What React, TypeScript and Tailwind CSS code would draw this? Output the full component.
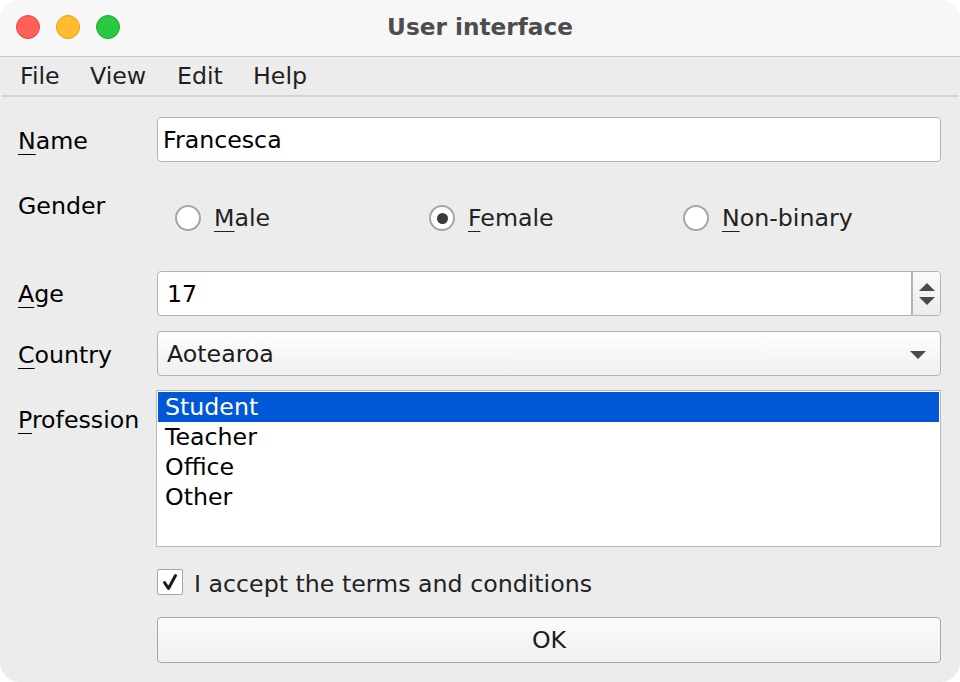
import React from 'react';

const font = { fontFamily: '"DejaVu Sans", "Liberation Sans", sans-serif' };

function U({ c, rest }: { c: string; rest: string }) {
  return (
    <span>
      <span className="underline decoration-1 underline-offset-[5px]">{c}</span>
      {rest}
    </span>
  );
}

function Radio({ label, checked }: { label: React.ReactNode; checked?: boolean }) {
  return (
    <div className="w-[254px] flex items-center gap-[13px]">
      <div className="w-[26px] h-[26px] rounded-full bg-white border-2 border-[#a6a6a6] flex items-center justify-center">
        {checked && <div className="w-[11px] h-[11px] rounded-full bg-[#3b3b3b]" />}
      </div>
      <div className="text-[23.7px] leading-[30px] text-[#222]">{label}</div>
    </div>
  );
}

export default function App() {
  return (
    <div className="w-[960px] h-[682px] bg-white" style={font}>
      <div className="w-full h-full rounded-[20px] overflow-hidden bg-[#ececec] flex flex-col">
        {/* Title bar */}
        <div className="h-[57px] shrink-0 bg-[#f7f7f7] border-b border-[#c9c9c9] relative flex items-center justify-center">
          <div className="absolute left-[16px] top-[15px] flex gap-[16px]">
            <div className="w-[24px] h-[24px] rounded-full bg-[#fe5f57] border border-[#e2463f]" />
            <div className="w-[24px] h-[24px] rounded-full bg-[#febc2e] border border-[#e1a116]" />
            <div className="w-[24px] h-[24px] rounded-full bg-[#28c840] border border-[#1aab29]" />
          </div>
          <div className="text-[23.2px] font-bold text-[#4d4d4d] -mt-[1px]">User interface</div>
        </div>

        {/* Menu bar */}
        <div className="h-[40px] shrink-0 flex flex-col">
          <div className="flex-1 flex items-center text-[23.7px] text-[#1f1f1f] pt-[1px]">
            <div className="pl-[20px] w-[70px]">File</div>
            <div className="pl-[20px] w-[92px]">View</div>
            <div className="pl-[15px] w-[70px]">Edit</div>
            <div className="pl-[21px] w-[83px]">Help</div>
          </div>
          <div className="h-[2px] mx-[2px] flex gap-px">
            <div className="w-[68px] bg-[#d3d3d3]" />
            <div className="w-[91px] bg-[#d3d3d3]" />
            <div className="w-[69px] bg-[#d3d3d3]" />
            <div className="w-[82px] bg-[#d3d3d3]" />
            <div className="flex-1 bg-[#d3d3d3]" />
          </div>
        </div>

        {/* Form */}
        <div className="flex flex-col pl-[18px] pr-[19px] text-[23.7px] text-black">
          {/* Name */}
          <div className="mt-[20px] h-[45px] flex">
            <div className="w-[139px] flex items-center pt-[4px]">
              <U c="N" rest="ame" />
            </div>
            <div className="flex-1 bg-white border border-[#b3b3b3] rounded-[4px] flex items-center pl-[5px] pt-[2px]">
              Francesca
            </div>
          </div>

          {/* Gender */}
          <div className="mt-[15px] h-[80px] flex">
            <div className="w-[139px] pt-[14px] leading-[30px]">Gender</div>
            <div className="flex-1 flex pl-[18px] pt-[26px] items-start">
              <Radio label={<U c="M" rest="ale" />} />
              <Radio label={<U c="F" rest="emale" />} checked />
              <Radio label={<U c="N" rest="on-binary" />} />
            </div>
          </div>

          {/* Age */}
          <div className="mt-[14px] h-[45px] flex">
            <div className="w-[139px] flex items-center pt-[3px]">
              <U c="A" rest="ge" />
            </div>
            <div className="flex-1 bg-white border border-[#b3b3b3] rounded-[4px] flex overflow-hidden">
              <div className="flex-1 flex items-center pl-[9px] pt-[2px]">17</div>
              <div className="w-[29px] border-l-2 border-[#b5b5b5] bg-gradient-to-b from-[#fafafa] to-[#ececec] flex flex-col items-center justify-center gap-[6px]">
                <svg width="16" height="8" viewBox="0 0 16 8">
                  <polygon points="0,8 16,8 8,0" fill="#4a4a4a" />
                </svg>
                <svg width="16" height="8" viewBox="0 0 16 8">
                  <polygon points="0,0 16,0 8,8" fill="#4a4a4a" />
                </svg>
              </div>
            </div>
          </div>

          {/* Country */}
          <div className="mt-[15px] h-[45px] flex">
            <div className="w-[139px] flex items-center pt-[4px]">
              <U c="C" rest="ountry" />
            </div>
            <div className="flex-1 bg-gradient-to-b from-[#ffffff] to-[#efefef] border border-[#b3b3b3] rounded-[4px] flex items-center pl-[9px] pr-[14px] pt-[2px] text-[#1c1c1c]">
              <div className="flex-1">Aotearoa</div>
              <svg width="16" height="8" viewBox="0 0 16 8">
                <polygon points="0,0 16,0 8,8" fill="#4a4a4a" />
              </svg>
            </div>
          </div>

          {/* Profession */}
          <div className="mt-[14px] h-[157px] flex">
            <div className="w-[138px] pt-[15px] leading-[30px]">
              <U c="P" rest="rofession" />
            </div>
            <div className="flex-1 bg-white border border-[#b8b8b8] p-px leading-[30px]">
              <div className="bg-[#0058d6] text-white pl-[7px]">Student</div>
              <div className="pl-[7px]">Teacher</div>
              <div className="pl-[7px]">Office</div>
              <div className="pl-[7px]">Other</div>
            </div>
          </div>

          {/* Checkbox */}
          <div className="mt-[22px] h-[26px] flex">
            <div className="w-[139px]" />
            <div className="flex items-center gap-[11px]">
              <div className="w-[26px] h-[26px] bg-white border border-[#a5a5a5] rounded-[2px] flex items-center justify-center">
                <svg width="18" height="18" viewBox="0 0 18 18">
                  <path d="M3.5 9.5 L7.5 15.5 L14.5 2.5" fill="none" stroke="#1a1a1a" strokeWidth="3" strokeLinecap="round" strokeLinejoin="round" />
                </svg>
              </div>
              <div className="text-[#222] leading-[30px] pt-[3px]">I accept the terms and conditions</div>
            </div>
          </div>

          {/* OK */}
          <div className="mt-[22px] h-[46px] flex">
            <div className="w-[139px]" />
            <div className="flex-1 bg-gradient-to-b from-[#fbfbfb] to-[#f0f0f0] border border-[#a8a8a8] rounded-[4px] flex items-center justify-center text-[#1c1c1c] pt-[1px]">
              OK
            </div>
          </div>
        </div>
      </div>
    </div>
  );
}
